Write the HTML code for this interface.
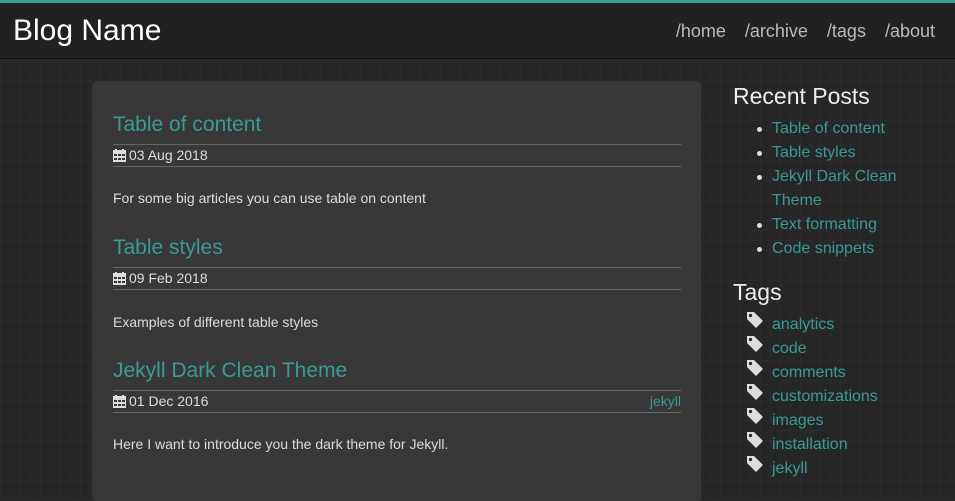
<!DOCTYPE html>
<html><head><style>
body{margin:0;width:955px;height:476px;overflow:hidden;background:#262626;background-image:linear-gradient(#2b2b2b 1px,transparent 1px),linear-gradient(90deg,#2b2b2b 1px,transparent 1px);background-size:10px 10px;font-family:"Liberation Sans",sans-serif;color:#ddd;position:relative}
.hdr{position:absolute;left:0;top:0;width:955px;height:55px;background:#212121;border-top:3px solid #3a9a96;border-bottom:1px solid #111}
.hdr .name{position:absolute;left:13px;top:11px;font-size:30px;color:#fff}
.nav{position:absolute;right:20px;top:18px;font-size:18px;color:#bbb}
.nav span{margin-left:19px}
.card{position:absolute;left:92px;top:81px;width:609px;height:420px;background:#383838;border-radius:5px}
a{color:#3a9a96;text-decoration:none}
.t{position:absolute;left:21px;font-size:21px;color:#3a9a96;top:0}
.m{position:absolute;left:21px;width:568px;height:21px;border-top:1px solid #666;border-bottom:1px solid #666;font-size:14px;line-height:21px;color:#ddd}
.m .tag{position:absolute;right:0;color:#3a9a96}
.p{position:absolute;left:21px;font-size:14px;color:#ddd}
.cal{display:inline-block;width:13px;height:13px;vertical-align:-2px;margin-right:3px}
h3{margin:0;font-size:23px;color:#eee;font-weight:normal;position:absolute;left:733px}
ul{position:absolute;left:772px;margin:0;padding:0;list-style:none;font-size:16px;line-height:24px}
ul.b li:before{content:"";position:absolute;left:-15px;margin-top:10px;width:5px;height:5px;border-radius:50%;background:#ddd}
ul.b li{position:relative;width:140px}
ul.tg li{position:relative}
ul.tg li svg{position:absolute;left:-26px;top:-2px}
</style></head><body>
<div class="hdr"><div class="name">Blog Name</div>
<div class="nav"><span>/home</span><span>/archive</span><span>/tags</span><span>/about</span></div></div>
<div class="card">
<div class="t" style="top:32px">Table of content</div>
<div class="m" style="top:63px"><svg class="cal" viewBox="0 0 13 13"><rect x="0" y="1" width="13" height="12" fill="#ddd"/><rect x="2" y="0" width="2" height="3" fill="#ddd"/><rect x="9" y="0" width="2" height="3" fill="#ddd"/><g fill="#383838"><rect x="1" y="5" width="3" height="2"/><rect x="5" y="5" width="3" height="2"/><rect x="9" y="5" width="3" height="2"/><rect x="1" y="9" width="3" height="2"/><rect x="5" y="9" width="3" height="2"/><rect x="9" y="9" width="3" height="2"/></g></svg>03 Aug 2018</div>
<div class="p" style="top:109px">For some big articles you can use table on content</div>
<div class="t" style="top:155px">Table styles</div>
<div class="m" style="top:186px"><svg class="cal" viewBox="0 0 13 13"><rect x="0" y="1" width="13" height="12" fill="#ddd"/><rect x="2" y="0" width="2" height="3" fill="#ddd"/><rect x="9" y="0" width="2" height="3" fill="#ddd"/><g fill="#383838"><rect x="1" y="5" width="3" height="2"/><rect x="5" y="5" width="3" height="2"/><rect x="9" y="5" width="3" height="2"/><rect x="1" y="9" width="3" height="2"/><rect x="5" y="9" width="3" height="2"/><rect x="9" y="9" width="3" height="2"/></g></svg>09 Feb 2018</div>
<div class="p" style="top:233px">Examples of different table styles</div>
<div class="t" style="top:278px">Jekyll Dark Clean Theme</div>
<div class="m" style="top:309px"><svg class="cal" viewBox="0 0 13 13"><rect x="0" y="1" width="13" height="12" fill="#ddd"/><rect x="2" y="0" width="2" height="3" fill="#ddd"/><rect x="9" y="0" width="2" height="3" fill="#ddd"/><g fill="#383838"><rect x="1" y="5" width="3" height="2"/><rect x="5" y="5" width="3" height="2"/><rect x="9" y="5" width="3" height="2"/><rect x="1" y="9" width="3" height="2"/><rect x="5" y="9" width="3" height="2"/><rect x="9" y="9" width="3" height="2"/></g></svg>01 Dec 2016<span class="tag">jekyll</span></div>
<div class="p" style="top:355px">Here I want to introduce you the dark theme for Jekyll.</div>
</div>
<h3 style="top:83px">Recent Posts</h3>
<ul class="b" style="top:117px"><li><a>Table of content</a></li><li><a>Table styles</a></li><li><a>Jekyll Dark Clean Theme</a></li><li><a>Text formatting</a></li><li><a>Code snippets</a></li></ul>
<h3 style="top:279px">Tags</h3>
<ul class="tg" style="top:313px">
<li><svg width="18" height="18" viewBox="0 0 18 18"><path d="M1 1h7l9 9-7 7-9-9z" fill="#ddd"/><circle cx="4.5" cy="4.5" r="1.6" fill="#262626"/></svg><a>analytics</a></li>
<li><svg width="18" height="18" viewBox="0 0 18 18"><path d="M1 1h7l9 9-7 7-9-9z" fill="#ddd"/><circle cx="4.5" cy="4.5" r="1.6" fill="#262626"/></svg><a>code</a></li>
<li><svg width="18" height="18" viewBox="0 0 18 18"><path d="M1 1h7l9 9-7 7-9-9z" fill="#ddd"/><circle cx="4.5" cy="4.5" r="1.6" fill="#262626"/></svg><a>comments</a></li>
<li><svg width="18" height="18" viewBox="0 0 18 18"><path d="M1 1h7l9 9-7 7-9-9z" fill="#ddd"/><circle cx="4.5" cy="4.5" r="1.6" fill="#262626"/></svg><a>customizations</a></li>
<li><svg width="18" height="18" viewBox="0 0 18 18"><path d="M1 1h7l9 9-7 7-9-9z" fill="#ddd"/><circle cx="4.5" cy="4.5" r="1.6" fill="#262626"/></svg><a>images</a></li>
<li><svg width="18" height="18" viewBox="0 0 18 18"><path d="M1 1h7l9 9-7 7-9-9z" fill="#ddd"/><circle cx="4.5" cy="4.5" r="1.6" fill="#262626"/></svg><a>installation</a></li>
<li><svg width="18" height="18" viewBox="0 0 18 18"><path d="M1 1h7l9 9-7 7-9-9z" fill="#ddd"/><circle cx="4.5" cy="4.5" r="1.6" fill="#262626"/></svg><a>jekyll</a></li>
</ul>
</body></html>
